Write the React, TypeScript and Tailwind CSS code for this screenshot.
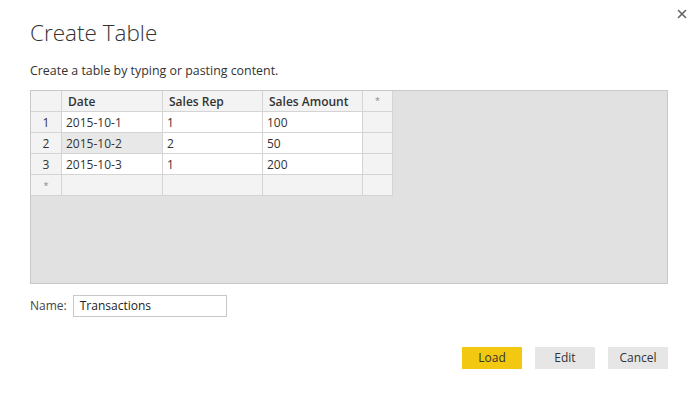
import { X } from 'lucide-react'

const cols = [
  { label: 'Date', w: 'w-[101px]' },
  { label: 'Sales Rep', w: 'w-[100px]' },
  { label: 'Sales Amount', w: 'w-[100px]' },
]

const rows = [
  ['2015-10-1', '1', '100'],
  ['2015-10-2', '2', '50'],
  ['2015-10-3', '1', '200'],
]

const cell = 'h-[21px] border-r border-b border-[#d4d4d4] flex items-center'

export default function App() {
  return (
    <div className="relative w-[698px] h-[398px] bg-white text-[#333] font-['Segoe_UI','Open_Sans',sans-serif] overflow-hidden">
      {/* close */}
      <button className="absolute right-[9px] top-[7px] text-[#666]">
        <X className="w-[14px] h-[14px]" strokeWidth={2.8} />
      </button>

      <div className="pl-[30px] pr-[30px] pt-[17px]">
        <h1 className="text-[22.5px] leading-[32px] font-light text-[#333]">Create Table</h1>
        <p className="mt-[14px] text-[12.4px] leading-[16px]">Create a table by typing or pasting content.</p>

        {/* grid area */}
        <div className="mt-[11px] h-[194px] border border-[#c8c8c8] bg-[#e1e1e1]">
          <div className="flex">
            <div className={`${cell} w-[31px] bg-[#f3f3f3]`} />
            {cols.map((c) => (
              <div key={c.label} className={`${cell} ${c.w} bg-[#f3f3f3] pl-[6px] pt-[1px] text-[12px] font-semibold text-[#333]`}>
                {c.label}
              </div>
            ))}
            <div className={`${cell} w-[30px] bg-[#f3f3f3] justify-center items-start pt-[3px] text-[9px] text-[#888]`}>*</div>
          </div>
          {rows.map((r, i) => (
            <div key={i} className="flex">
              <div className={`${cell} w-[31px] bg-[#f3f3f3] justify-center pt-[1px] text-[12px]`}>{i + 1}</div>
              {r.map((v, j) => (
                <div
                  key={j}
                  className={`${cell} ${cols[j].w} pl-[4px] pt-[1px] text-[12px] ${i === 1 && j === 0 ? 'bg-[#e8e8e8]' : 'bg-white'}`}
                >
                  {v}
                </div>
              ))}
              <div className={`${cell} w-[30px] bg-[#f3f3f3]`} />
            </div>
          ))}
          <div className="flex">
            <div className={`${cell} w-[31px] bg-[#f3f3f3] justify-center items-start pt-[4px] text-[9px] text-[#888]`}>*</div>
            {cols.map((c) => (
              <div key={c.label} className={`${cell} ${c.w} bg-[#f3f3f3]`} />
            ))}
            <div className={`${cell} w-[30px] bg-[#f3f3f3]`} />
          </div>
        </div>

        {/* name */}
        <div className="mt-[11px] flex items-center gap-[8px]">
          <label className="text-[12px] text-[#444]">Name:</label>
          <div className="ml-[-2px] w-[154px] h-[22px] border border-[#c8c8c8] flex items-center pl-[6px] text-[12px] text-[#222]">
            Transactions
          </div>
        </div>

        {/* buttons */}
        <div className="mt-[30px] flex justify-end gap-[13px]">
          <button className="w-[60px] h-[22px] bg-[#f2c811] text-[12px] text-[#333]">Load</button>
          <button className="w-[60px] h-[22px] bg-[#e6e6e6] text-[12px] text-[#333]">Edit</button>
          <button className="w-[60px] h-[22px] bg-[#e6e6e6] text-[12px] text-[#333]">Cancel</button>
        </div>
      </div>
    </div>
  )
}
